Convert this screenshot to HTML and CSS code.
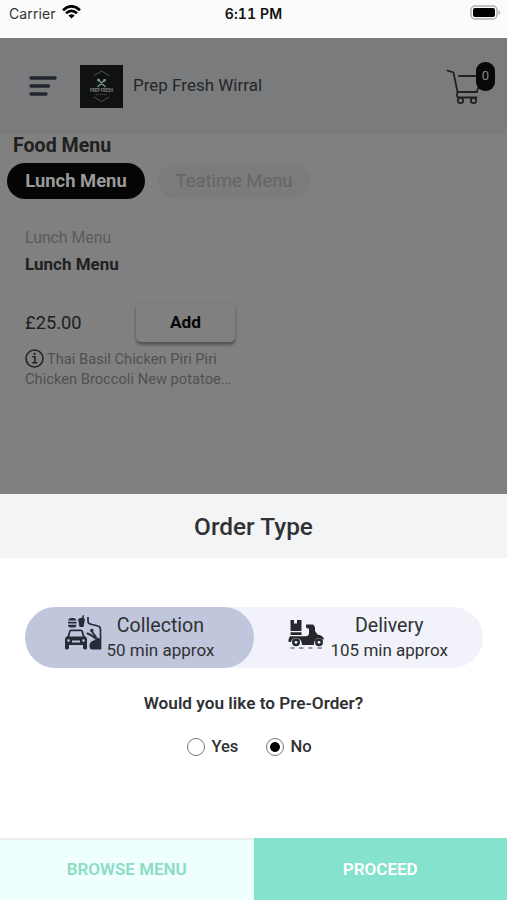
FILE: index.html
```html
<!DOCTYPE html>
<html lang="en">
<head>
<meta charset="utf-8">
<title>Prep Fresh Wirral</title>
<link rel="stylesheet" href="styles.css">
</head>
<body>
<div class="screen">
  <div class="status">
    <div class="carrier"><span>Carrier</span>
      <svg width="19" height="14" viewBox="0 0 19 14" fill="none" stroke="#000" stroke-width="2.7"><path d="M1 5.2Q9.500-2.600 18 5.200M4 8.300Q9.500 3.300 15 8.300"/><path d="M9.500 13.600L6.400 10.500Q9.500 7.900 12.600 10.500Z" fill="#000" stroke="none"/></svg>
    </div>
    <div class="clock">6:11 PM</div>
    <div class="battery">
      <svg width="31" height="15" viewBox="0 0 31 15"><rect x="1" y="1" width="26" height="13" rx="4" fill="#fafafa" stroke="#b0b0b0" stroke-width="1.500"/><rect x="3" y="3" width="22" height="9" rx="2" fill="#000"/><path d="M28.500 5Q32 7.500 28.500 10Z" fill="#b0b0b0"/></svg>
    </div>
  </div>
  <header class="header">
    <svg class="burger" width="28" height="20" viewBox="0 0 28 20" stroke="#24262e" stroke-width="3.400" stroke-linecap="round"><path d="M2 2H26M2 10H19.500M2 18H17"/></svg>
    <svg class="logo" width="43" height="43" viewBox="0 0 43 43"><rect width="43" height="43" fill="#101212"/><g fill="none" stroke="#55534c" stroke-width="1"><path d="M14 10.500L21.500 6L29 10.500M14 32L21.500 36.500L29 32"/></g><g stroke="#78908e" stroke-width="1.500" stroke-linecap="round"><path d="M18.500 15L25 21.500M24.500 15L18 21.500"/></g><circle cx="18.500" cy="15" r="1.500" fill="#78908e"/><path d="M23.500 14L26 14L25.500 17L23 16Z" fill="#78908e"/><text x="21.500" y="27" text-anchor="middle" textLength="23" lengthAdjust="spacingAndGlyphs" font-family="Roboto, sans-serif" font-weight="700" font-size="5" fill="#858585">PREP FRESH</text><path d="M16 29.500H27" stroke="#444" stroke-width=".8"/></svg>
    <div class="brand">Prep Fresh Wirral</div>
    <div class="cart">
      <svg width="36" height="38" viewBox="0 0 36 38" fill="none" stroke="#202123" stroke-width="1.800" stroke-linecap="round" stroke-linejoin="round"><path d="M1.500 2.500L7.500 4.500L11.500 24H31M13 8H31M32 20L31 24M11.500 24Q9.500 29.500 13.500 29.500H30.500"/><circle cx="14.500" cy="32.500" r="2.700"/><circle cx="27.500" cy="32.500" r="2.700"/></svg>
      <span class="badge">0</span>
    </div>
  </header>
  <main class="menu">
    <h1>Food Menu</h1>
    <div class="tabs"><div class="tab on">Lunch Menu</div><div class="tab off">Teatime Menu</div></div>
    <section class="item">
      <div class="category">Lunch Menu</div>
      <div class="name">Lunch Menu</div>
      <div class="buy"><span class="price">£25.00</span><button class="add">Add</button></div>
      <div class="desc">
        <svg width="19" height="19" viewBox="0 0 19 19" fill="none" stroke="#202020" stroke-width="1.500"><circle cx="9.500" cy="9.500" r="8.500"/><path d="M7.300 7.800H10V13.600M7.200 13.800H12.300"/><circle cx="9.600" cy="4.900" r="1.100" fill="#202020" stroke="none"/></svg>
        <span>Thai Basil Chicken Piri Piri</span></div>
      <div class="desc2">Chicken Broccoli New potatoe<span class="dots">...</span></div>
    </section>
  </main>
  <section class="sheet">
    <h2>Order Type</h2>
    <div class="choices">
      <div class="choice chosen">
        <svg width="38" height="36" viewBox="0 0 38 36" fill="#282b38"><path d="M4 5.500Q4.500 3 7 3H9.500Q12 3 12.500 5.500ZM4 6.800H12.500V8.500H4ZM4 9.800H12.500Q12.500 12.500 10 12.500H6.500Q4 12.500 4 9.800ZM14 4L18 2.500L19 0L20.200.5L19.500 3L21 4L19.500 12H15.500Z"/><path d="M5 16Q5.500 14.500 7 14.500H17Q18.500 14.500 19 16L20.500 21Q23 22 23 24V33Q23 34.500 21 34.500Q19 34.500 19 32.500V30H5V32.500Q5 34.500 3 34.500Q1 34.500 1 33V24Q1 22 3.500 21Z"/><path d="M6.800 16.300H17.200L18.700 21.500H5.300Z" fill="#c0c6db"/><path d="M8 25.500H16V27.500H8Z" fill="#c0c6db"/><circle cx="4.500" cy="25.500" r="1.300" fill="#c0c6db"/><circle cx="19.500" cy="25.500" r="1.300" fill="#c0c6db"/><path d="M24 2V6Q24 9 28 9.500L34 11Q36.500 11.500 36.500 15V34" fill="none" stroke="#282b38" stroke-width="1.700"/><circle cx="27.800" cy="15.500" r="1.800"/><path d="M23.500 18.500L27 20.200L31 23M28.500 17.500L32 22" fill="none" stroke="#282b38" stroke-width="2" stroke-linecap="round"/><path d="M25.500 30Q26 26 30 25.500L33 22.500L37 24V34.500H28Q25.500 34.500 25.500 30Z"/></svg>
        <div class="copy"><div class="kind">Collection</div><div class="time">50 min approx</div></div>
      </div>
      <div class="choice delivery">
        <svg width="38" height="32" viewBox="0 0 38 32" fill="#26282e"><path d="M2.500 1H6V4.500H9V1H13.500V12H2.500ZM2.500 13.200H13.500V16H2.500ZM2 17.300H18Q21 17 21 14V9.500H19.500Q18 9.500 18 7.500V5.500H25L27 8V12L29.500 15.500Q34 16 36 19.500L35 20.800Q31 17.800 28 20Q26 22 26 26H14Q13.500 19 8 19Q4 19 3 23H.5Q.5 19 2 17.300Z"/><circle cx="8" cy="23.300" r="4"/><circle cx="31" cy="23.300" r="4"/><g fill="#f1f2fa"><circle cx="8" cy="23.300" r="1.400"/><circle cx="31" cy="23.300" r="1.400"/></g><path d="M2.500 29H6.500M11 29H15.500M20.500 29H24.500M29.500 29H34" stroke="#777980" stroke-width="1.400"/></svg>
        <div class="copy"><div class="kind">Delivery</div><div class="time">105 min approx</div></div>
      </div>
    </div>
    <div class="question">Would you like to Pre-Order?</div>
    <div class="answers">
      <label><span class="radio"></span>Yes</label>
      <label><span class="radio checked"></span>No</label>
    </div>
    <footer><button class="browse">BROWSE MENU</button><button class="proceed">PROCEED</button></footer>
  </section>
</div>
</body>
</html>
```
FILE: styles.css
```css
* { box-sizing: border-box; }
body { margin: 0; font-family: Roboto, sans-serif; color: #303133; }
button { border: 0; padding: 0; font: inherit; }
svg { flex: none; display: block; }
.screen { width: 507px; height: 900px; display: flex; flex-direction: column; background: #808080; overflow: hidden; white-space: nowrap; }
.status { height: 38px; background: #fbfbfb; display: grid; grid-template-columns: 1fr auto 1fr; padding: 5px 6px 0 9px; font: 14px/17px Inter, sans-serif; color: #111; }
.carrier { display: flex; gap: 6px; color: #333; letter-spacing: .1px; }
.clock { font-weight: 600; font-variant-numeric: tabular-nums; letter-spacing: .1px; margin-left: -3px; }
.battery { justify-self: end; }
.header { height: 96px; background: #797b7d; display: flex; align-items: center; padding: 0 11px 0 29px; }
.logo { margin-left: 23px; }
.brand { margin-left: 10px; font-size: 17px; line-height: 20px; margin-top: -2px; color: #252628; }
.cart { position: relative; margin-left: auto; width: 50px; height: 42px; padding-top: 3px; }
.badge { position: absolute; left: 30px; top: -3px; width: 19px; height: 29px; border-radius: 9px; background: #080808; color: #888; font-size: 13px; line-height: 28px; text-align: center; }
.menu { height: 360px; color: #202020; }
h1 { margin: 0; padding: 1px 13px 0; font-size: 19.6px; line-height: 22px; font-weight: 700; }
.tabs { display: flex; gap: 13px; padding: 6px 7px 0; }
.tab { height: 36px; border-radius: 18px; font-size: 18.4px; line-height: 35px; text-align: center; }
.on { width: 138px; background: #050505; color: #9a9a9a; font-weight: 700; }
.off { width: 152px; background: #7b7b7b; color: #656565; }
.item { padding: 29px 25px 0; }
.category { font-size: 15.8px; line-height: 20px; color: #5b5b5b; }
.name { margin-top: 6px; font-size: 17px; line-height: 20px; font-weight: 700; }
.buy { display: flex; justify-content: space-between; align-items: center; width: 210px; height: 40px; margin-top: 28px; }
.price { font-size: 18.3px; }
.add { width: 99px; height: 39px; border-radius: 5px; background: #808080; box-shadow: 0 3px 3px #555, 0 0 2px #707070; color: #060606; font-size: 17.3px; font-weight: 700; }
.desc { display: flex; align-items: center; gap: 3px; margin-top: 6px; height: 21px; font-size: 14.7px; color: #505050; }
.desc2 { font-size: 14.7px; line-height: 21px; color: #505050; }
.dots { letter-spacing: -.7px; }
.sheet { height: 406px; background: #fff; display: flex; flex-direction: column; align-items: center; }
h2 { margin: 0; width: 100%; height: 64px; background: #f3f4f6; font-size: 24.4px; line-height: 65px; font-weight: 500; text-align: center; }
.choices { display: flex; width: 458px; height: 61px; margin-top: 49px; border-radius: 31px; background: #f1f2fa; }
.choice { width: 229px; display: flex; padding-top: 8px; padding-left: 39px; gap: 5px; border-radius: 31px; }
.chosen { background: #c0c6db; }
.delivery { padding-left: 34px; }
.delivery svg { margin-top: 4px; }
.copy { text-align: center; margin-top: -2px; }
.kind { font-size: 19.6px; line-height: 25px; }
.time { font-size: 17px; line-height: 25px; }
.question { margin-top: 24px; font-size: 17.2px; line-height: 22px; font-weight: 600; }
.answers { display: flex; gap: 28px; margin: 23px 0 0 -8px; font-size: 16.6px; font-weight: 500; line-height: 20px; }
label { display: flex; gap: 6px; }
.radio { width: 18px; height: 18px; margin-top: 1px; border: 1px solid #777; border-radius: 50%; }
.checked { background: radial-gradient(circle, #000 4.5px, transparent 5.3px); }
footer { margin-top: auto; width: 100%; height: 62px; display: flex; font-size: 17px; font-weight: 600; }
footer button { flex: 1; padding-bottom: 1px; }
.browse { background: #effffe; color: #8adcc4; border-top: 2px solid #e9eeee; padding-bottom: 3px; }
.proceed { background: #85e2cc; color: #fff; }
```
